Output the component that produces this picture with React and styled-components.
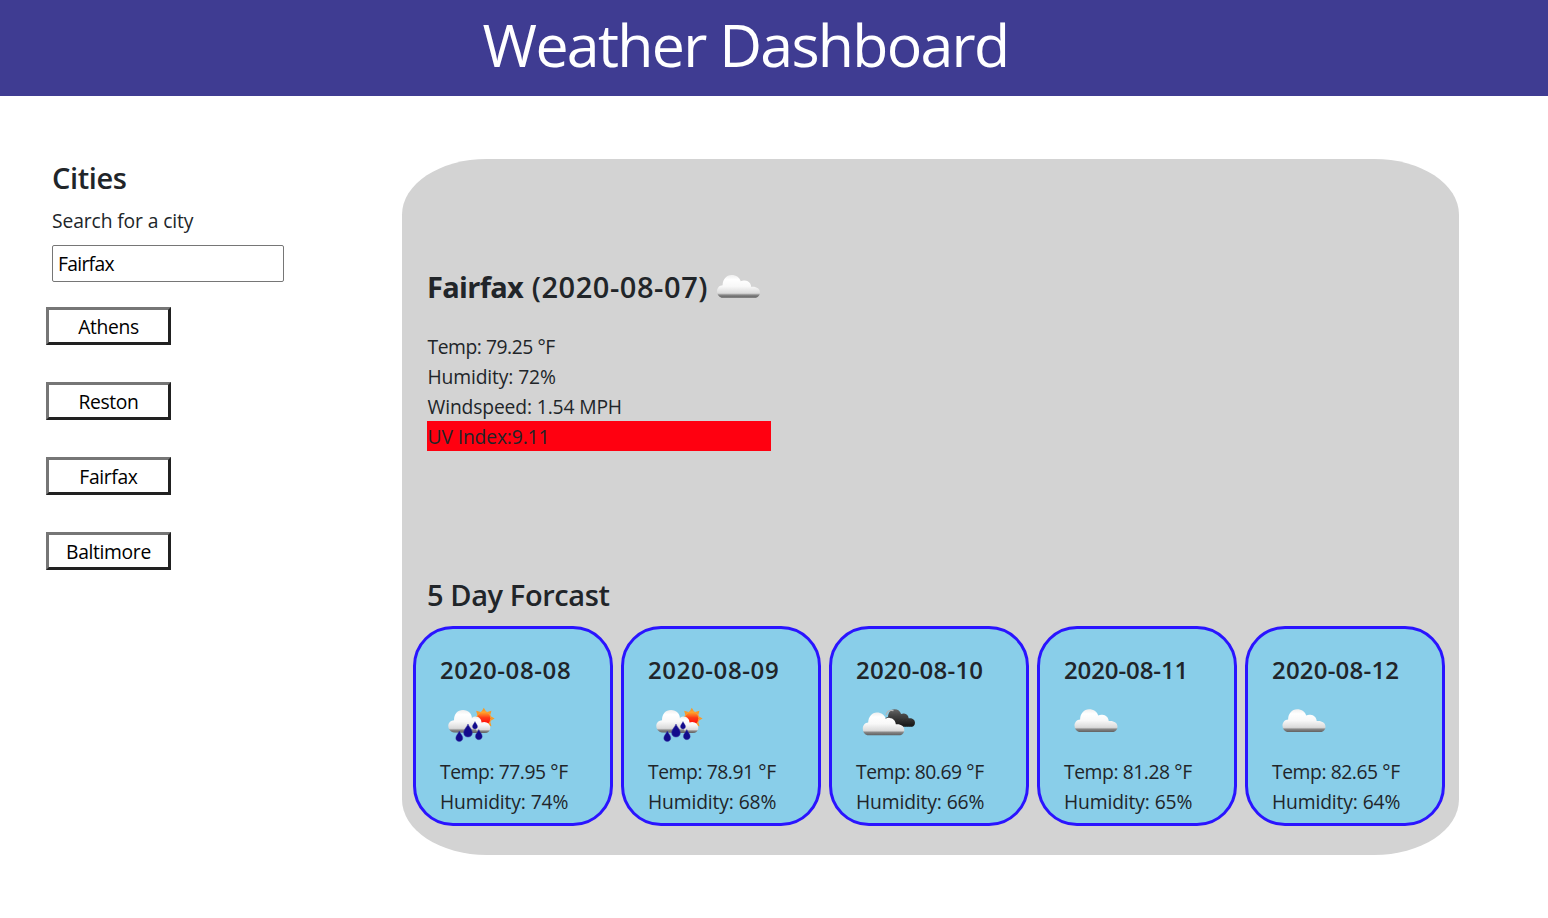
import React, { useState } from "react";
import styled, { createGlobalStyle } from "styled-components";

const GlobalStyle = createGlobalStyle`
  *, *::before, *::after { box-sizing: border-box; }
  body {
    margin: 0;
    background: #fff;
    color: #212529;
    font-family: "Open Sans", "Noto Sans", sans-serif;
    font-size: 19.3px;
    font-weight: 400;
    line-height: 30px;
    overflow: hidden;
  }
  h1, h2, h3, h4, p { margin: 0; font-weight: inherit; }
`;

const Header = styled.header`
  height: 96px;
  padding: 0 57px 8px 0;
  background: #3f3c92;
  color: #fff;
  display: flex;
  align-items: center;
  justify-content: center;
`;

const Title = styled.h1`
  font-size: 59px;
  line-height: 72px;
  font-weight: 400;
  letter-spacing: -1.7px;
  white-space: nowrap;
`;

const Main = styled.main`
  display: flex;
  align-items: flex-start;
  padding-top: 63px;
`;

const Sidebar = styled.aside`
  flex: none;
  width: 402px;
  padding-left: 46px;
`;

const SearchForm = styled.div`
  padding: 1px 0 0 6px;
  display: flex;
  flex-direction: column;
  align-items: flex-start;
`;

const SectionTitle = styled.h2`
  font-size: 29px;
  line-height: 36px;
  font-weight: 600;
  letter-spacing: -0.4px;
  white-space: nowrap;
`;

const CityName = styled.b`
  font-weight: 700;
  letter-spacing: -0.7px;
`;

const CurrentDate = styled.span`
  margin-left: 1.5px;
  letter-spacing: 0.55px;
`;

const Label = styled.label`
  margin: 10px 0 9px;
  letter-spacing: -0.12px;
`;

const SearchInput = styled.input`
  width: 232px;
  height: 37px;
  padding: 0 4px 0 5px;
  border: 1px solid #767676;
  border-radius: 2px;
  font: inherit;
  color: #000;
  letter-spacing: -0.7px;
  outline: none;
`;

const CityList = styled.div`
  margin-top: 25px;
  display: flex;
  flex-direction: column;
  gap: 37px;
`;

const CityButton = styled.button`
  width: 125px;
  height: 38px;
  padding: 1px 0 0;
  border: 3px solid;
  border-color: #767676 #212121 #212121 #767676;
  background: #fff;
  color: #000;
  font: inherit;
  letter-spacing: -0.35px;
`;

const Panel = styled.section`
  width: 1057px;
  height: 696px;
  padding-top: 110px;
  border-radius: 8%;
  background: #d3d3d3;
`;

const Current = styled.div`
  width: 369px;
  height: 308px;
  padding-left: 25px;
`;

const CurrentHeading = styled.div`
  display: flex;
  align-items: flex-start;
  gap: 9px;
  margin-bottom: 26px;
`;

const Reading = styled.p`
  height: 30px;
  padding: ${(p) => (p.$raised ? "0" : "1px 0 0 0.5px")};
  letter-spacing: ${(p) => p.$spacing || "-0.14px"};
  white-space: nowrap;
  background: ${(p) => (p.$alert ? "#ff0010" : "transparent")};
`;

const ForecastTitle = styled.div`
  padding: 0 0 13px 25px;
`;

const Forecast = styled.div`
  display: flex;
  gap: 8px;
  padding-left: 11px;
`;

const DayCard = styled.article`
  width: 200px;
  height: 200px;
  padding: 26px 0 0 24px;
  border: 3px solid #2a14ff;
  border-radius: 20%;
  background: #89cee9;
`;

const DayDate = styled.h3`
  font-size: 24px;
  line-height: 30px;
  font-weight: 600;
  letter-spacing: ${(p) => p.$spacing || "0.6px"};
`;

const Icon = styled.svg`
  display: block;
  flex: none;
  overflow: visible;
`;

const DayIcon = styled.div`
  height: 62px;
  margin-top: 10px;
`;

const CLOUD =
  "M4.5 22.8C1.5 21.8 0 19 0 16.3C0 12.8 2.5 10.3 5.6 10.2C5.8 4.3 9.3 0 14.5 0C19.3 0 22.8 2.6 23.7 6.3C25 5.6 26.3 5.3 27.8 5.5C31.5 5.8 34 8.3 34.2 11.9C38.8 11.2 43 13.5 43 17.5C43 20 41.5 22.2 39 22.8Z";

function CloudDefs() {
  return (
    <svg width="0" height="0" style={{ display: "block" }} aria-hidden="true">
      <defs>
        <linearGradient id="white" x1="0" y1="0" x2="0" y2="1">
          <stop offset="0" stopColor="#efefef" />
          <stop offset="0.2" stopColor="#fff" />
          <stop offset="0.5" stopColor="#f8f8f8" />
          <stop offset="0.8" stopColor="#dadada" />
          <stop offset="0.88" stopColor="#858585" />
          <stop offset="1" stopColor="#606060" />
        </linearGradient>
        <linearGradient id="dark" x1="0" y1="0" x2="0" y2="1">
          <stop offset="0" stopColor="#666" />
          <stop offset="0.4" stopColor="#414141" />
          <stop offset="1" stopColor="#151515" />
        </linearGradient>
        <linearGradient id="sun" x1="0" y1="0" x2="0" y2="1">
          <stop offset="0" stopColor="#ffb52e" />
          <stop offset="0.45" stopColor="#ff3b18" />
          <stop offset="1" stopColor="#f00" />
        </linearGradient>
        <filter id="soft" x="-10%" y="-10%" width="120%" height="120%">
          <feGaussianBlur stdDeviation="0.45" />
        </filter>
      </defs>
    </svg>
  );
}

const Cloud = ({ transform, fill = "url(#white)" }) => (
  <path d={CLOUD} transform={transform} fill={fill} filter="url(#soft)" />
);

const Drop = ({ x, y, h }) => (
  <path
    transform={`translate(${x} ${y}) scale(${h / 12})`}
    d="M0 0C1 3 4 5 4 8C4 10.4 2.2 12 0 12C-2.2 12-4 10.4-4 8C-4 5-1 3 0 0Z"
    fill="#130b8c"
    stroke="#3e3aa6"
    strokeWidth="0.5"
  />
);

const RAYS = [0, 45, 90, 135, 180, 225, 270, 315];

function WeatherIcon({ kind }) {
  return (
    <Icon width="70" height="52" viewBox="0 0 70 52">
      {kind === "cloud" && <Cloud transform="translate(10.5 14.2)" />}
      {kind === "broken" && (
        <>
          <Cloud transform="translate(43.5 14.2) scale(.72 .77) translate(-21.5 0)" fill="url(#dark)" />
          <path d="M30 20C31 16.5 34 14.8 37.5 15.6" fill="none" stroke="#b5b5b5" strokeWidth="1.2" />
          <Cloud transform="translate(6.8 17.4) scale(.965 1)" />
        </>
      )}
      {kind === "rain" && (
        <>
          <g filter="url(#soft)">
            {RAYS.map((a) => (
              <path key={a} d="M-2.8-6L0-10.8L2.8-6Z" fill="#f59b2d" transform={`translate(43.8 23.5) rotate(${a})`} />
            ))}
            <circle cx="43.8" cy="23.5" r="7" fill="url(#sun)" stroke="#f8a13a" strokeWidth="0.9" />
          </g>
          <path
            d="M33 38C29 34 29 21.5 35 21.5C39.5 21.5 41.5 24.5 41.5 27.5C46 25.5 50.5 29 50.3 33C50 36 48 38 45 38Z"
            fill="url(#white)"
            filter="url(#soft)"
          />
          <path
            d="M14 37.5C10.5 37 8.3 34 8.3 31C8.3 27.5 11 25.5 14 25.3C14 19 17.5 15 23 15C28.5 15 32 18.5 32 24C35 25 36.5 28 36 38Z"
            fill="url(#white)"
            filter="url(#soft)"
          />
          <Drop x={19.3} y={36} h={10.5} />
          <Drop x={28} y={29} h={13} />
          <Drop x={35} y={26.5} h={7.6} />
          <Drop x={38.8} y={34.5} h={10.2} />
        </>
      )}
    </Icon>
  );
}

const CITIES = ["Athens", "Reston", "Fairfax", "Baltimore"];

const DAYS = [
  { date: "2020-08-08", icon: "rain", temp: "77.95", humidity: 74 },
  { date: "2020-08-09", icon: "rain", temp: "78.91", humidity: 68 },
  { date: "2020-08-10", icon: "broken", temp: "80.69", humidity: 66, spacing: "0.2px" },
  { date: "2020-08-11", icon: "cloud", temp: "81.28", humidity: 65, spacing: "-0.1px" },
  { date: "2020-08-12", icon: "cloud", temp: "82.65", humidity: 64, spacing: "0.2px" },
];

export default function App() {
  const [city, setCity] = useState("Fairfax");
  return (
    <>
      <GlobalStyle />
      <CloudDefs />
      <Header>
        <Title>Weather Dashboard</Title>
      </Header>
      <Main>
        <Sidebar>
          <SearchForm>
            <SectionTitle>Cities</SectionTitle>
            <Label htmlFor="city">Search for a city</Label>
            <SearchInput id="city" value={city} onChange={(e) => setCity(e.target.value)} />
          </SearchForm>
          <CityList>
            {CITIES.map((name) => (
              <CityButton key={name}>{name}</CityButton>
            ))}
          </CityList>
        </Sidebar>
        <Panel>
          <Current>
            <CurrentHeading>
              <SectionTitle>
                <CityName>Fairfax</CityName> <CurrentDate>(2020-08-07)</CurrentDate>
              </SectionTitle>
              <Icon width="43" height="24" viewBox="0 -6 43 24">
                <Cloud />
              </Icon>
            </CurrentHeading>
            <Reading $spacing="-0.45px">Temp: 79.25 °F</Reading>
            <Reading>Humidity: 72%</Reading>
            <Reading>Windspeed: 1.54 MPH</Reading>
            <Reading $alert>UV Index:9.11</Reading>
          </Current>
          <ForecastTitle>
            <SectionTitle>5 Day Forcast</SectionTitle>
          </ForecastTitle>
          <Forecast>
            {DAYS.map((day) => (
              <DayCard key={day.date}>
                <DayDate $spacing={day.spacing}>{day.date}</DayDate>
                <DayIcon>
                  <WeatherIcon kind={day.icon} />
                </DayIcon>
                <Reading $raised $spacing="-0.42px">Temp: {day.temp} °F</Reading>
                <Reading $raised>Humidity: {day.humidity}%</Reading>
              </DayCard>
            ))}
          </Forecast>
        </Panel>
      </Main>
    </>
  );
}
